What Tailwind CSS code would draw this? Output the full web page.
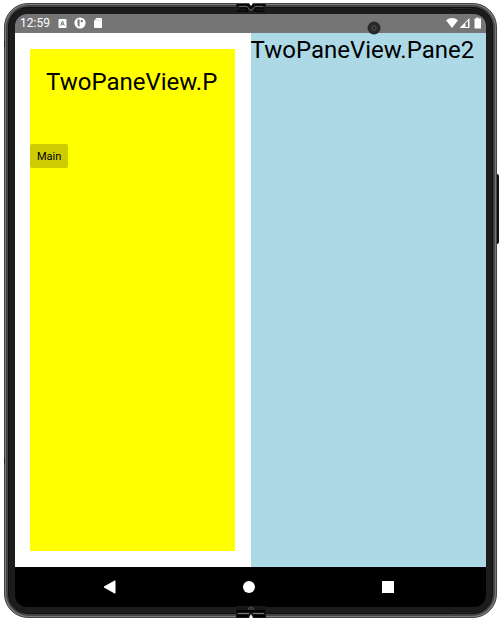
<!DOCTYPE html>
<html lang="en">
<head>
<meta charset="utf-8">
<meta name="viewport" content="width=device-width, initial-scale=1">
<title>TwoPaneView</title>
<script src="https://cdn.jsdelivr.net/npm/@tailwindcss/browser@4"></script>
</head>
<body class="h-screen overflow-hidden bg-white pt-[3px] pr-[3px] pb-[2px] pl-1 font-['Roboto',sans-serif]">
<div class="relative h-full rounded-[24px] border border-[#444] bg-[#777] p-px">
  <div class="h-full rounded-[23px] bg-[#444] p-[2px]">
    <div class="h-full rounded-[20px] border border-[#111] bg-[#1c1c1c] p-[6px]">
      <div class="flex h-full flex-col overflow-hidden rounded-[12px] bg-black">
        <header class="flex h-[19px] shrink-0 items-center bg-[#757575] pr-1 pb-px pl-[5px] text-white">
          <time class="w-[37px] text-[12px] leading-4">12:59</time>
          <svg class="h-3 w-3" viewBox="0 0 12 12" role="img" aria-label="Keyboard"><rect x="1.5" y="2" width="8" height="9" rx="1" fill="#fff"/><path d="M3.7 8.7L5.5 4L7.3 8.7M4.4 7.2H6.6" fill="none" stroke="#757575"/></svg>
          <svg class="ml-[5px] h-3 w-3" viewBox="0 0 12 12" role="img" aria-label="App notification"><circle cx="6" cy="6" r="5.6" fill="#fff"/><path d="M3.5 2.5H5.6V9.5H4.5Q3.5 8.5 3.5 6ZM6.8 3H8.7V5.3H6.8Z" fill="#757575"/></svg>
          <svg class="ml-[6px] h-3 w-3" viewBox="0 0 12 12" role="img" aria-label="Storage"><path d="M4.5 1H9Q10 1 10 2V10Q10 11 9 11H3Q2 11 2 10V4Z" fill="#fff"/><path d="M5 2.5V4M6.7 2.5V4M8.4 2.5V4" stroke="#bbb" stroke-width=".6"/></svg>
          <svg class="ml-auto h-3 w-3" viewBox="0 0 12 12" role="img" aria-label="Wi-Fi"><path d="M0 3.2Q6 -1 12 3.2L6 11Z" fill="#fff"/></svg>
          <svg class="ml-px h-3 w-3" viewBox="0 0 12 12" role="img" aria-label="Signal"><path d="M.5 11L10.5 1V11Z" fill="#fff"/><path d="M6.5 6.3L9 3.8V10H6.5Z" fill="#757575"/></svg>
          <svg class="ml-[3px] h-3 w-2" viewBox="0 0 8 12" role="img" aria-label="Battery"><path d="M2.4 .5H4.6V1.5H7V11.5H.5V1.5H2.4Z" fill="#fff"/></svg>
        </header>
        <main class="grid min-h-0 flex-1 grid-cols-2">
          <section class="bg-white p-4 pl-[15px]">
            <div class="h-full bg-[#ffff00]">
              <h1 class="overflow-hidden px-4 pt-4 text-[24px] leading-[34px] text-black">TwoPaneView.P</h1>
              <button type="button" class="mt-[45px] flex h-6 items-center rounded-[2px] bg-[#cccc00] px-[7px] pt-px text-[11px] leading-4 text-black">Main</button>
            </div>
          </section>
          <section class="bg-[#add8e6]">
            <h2 class="text-[24px] leading-[34px] whitespace-nowrap text-black">TwoPaneView.Pane2</h2>
          </section>
        </main>
        <nav class="flex h-10 shrink-0 items-center justify-around pr-[29px] pl-[26px]" aria-label="System navigation">
          <button type="button" aria-label="Back"><svg class="h-[14px] w-[14px]" viewBox="0 0 14 14"><path d="M1 7L12 .8V13.2Z" fill="#fff" stroke="#fff" stroke-linejoin="round"/></svg></button>
          <button type="button" aria-label="Home"><svg class="h-[14px] w-[14px]" viewBox="0 0 14 14"><circle cx="7" cy="7" r="6" fill="#fff"/></svg></button>
          <button type="button" aria-label="Recent apps"><svg class="h-[14px] w-[14px]" viewBox="0 0 14 14"><rect x="1" y="1" width="12" height="12" rx=".6" fill="#fff"/></svg></button>
        </nav>
      </div>
    </div>
  </div>
  <svg class="absolute top-[17px] right-[115px] h-[14px] w-[14px]" viewBox="0 0 14 14" aria-hidden="true"><circle cx="7" cy="7" r="6.5" fill="#292929"/><circle cx="7" cy="7" r="2.7" fill="#444"/><circle cx="7" cy="7" r="1.3" fill="#222"/></svg>
  <svg class="absolute -top-px left-1/2 h-[11px] w-[30px] -translate-x-1/2" viewBox="0 0 30 11" aria-hidden="true"><path d="M0 1H30V10H0Z" fill="#1c1c1c"/><path d="M1 2H12L15 5L18 2H29M1 8H11V5H3M29 8H19V5H27" fill="none" stroke="#060606" stroke-width="1.6"/><path d="M3 3.5H11L14 7H16L19 3.5H27" fill="none" stroke="#666"/><path d="M13 0L15 3L17 0Z" fill="#fff"/></svg>
  <svg class="absolute -bottom-px left-1/2 h-3 w-[30px] -translate-x-1/2" viewBox="0 0 30 12" aria-hidden="true"><path d="M0 0H30V12H0Z" fill="#161616"/><path d="M1 5H29M1 10H12M18 10H29" stroke="#000" stroke-width="2"/><path d="M2 7.5H13M17 7.5H28" stroke="#777"/><path d="M12 4Q12 1 15 1T18 4" fill="#333" stroke="#444"/><path d="M13 12L15 8L17 12Z" fill="#fff"/></svg>
  <span class="absolute top-[170px] -right-[3px] h-[70px] w-[2px] rounded-r-sm bg-[#111]"></span>
  <span class="absolute top-[3px] right-[24px] h-[3px] w-[22px] rounded-full border border-[#111] bg-[#292929]"></span>
  <span class="absolute right-[24px] bottom-[3px] h-[3px] w-[22px] rounded-full border border-[#111] bg-[#292929]"></span>
  <span class="absolute top-[454px] -left-px h-[6px] w-px bg-[#222]"></span>
  <span class="absolute top-[37px] -left-px h-[6px] w-px bg-[#222]"></span>
</div>
</body>
</html>
